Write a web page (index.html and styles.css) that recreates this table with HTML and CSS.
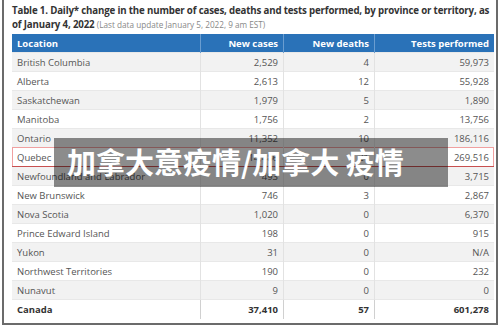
FILE: index.html
```html
<!DOCTYPE html>
<html>
<head>
<meta charset="utf-8">
<link rel="stylesheet" href="styles.css">
</head>
<body>
<div class="frame">
  <div class="content">
    <h1 class="title">Table 1. Daily* change in the number of cases, deaths and tests performed, by province or territory, as of January 4, 2022 <span class="note">(Last data update January 5, 2022, 9 am EST)</span></h1>
    <table class="data">
      <thead>
        <tr><th class="loc">Location</th><th class="c1">New cases</th><th class="c2">New deaths</th><th class="c3">Tests performed</th></tr>
      </thead>
      <tbody>
        <tr><td>British Columbia</td><td>2,529</td><td>4</td><td>59,973</td></tr>
        <tr><td>Alberta</td><td>2,613</td><td>12</td><td>55,928</td></tr>
        <tr><td>Saskatchewan</td><td>1,979</td><td>5</td><td>1,890</td></tr>
        <tr><td>Manitoba</td><td>1,756</td><td>2</td><td>13,756</td></tr>
        <tr><td>Ontario</td><td>11,352</td><td>10</td><td>186,116</td></tr>
        <tr class="hl"><td>Quebec</td><td>14,486</td><td>21</td><td>269,516</td></tr>
        <tr><td>Newfoundland and Labrador</td><td>493</td><td>0</td><td>3,715</td></tr>
        <tr><td>New Brunswick</td><td>746</td><td>3</td><td>2,867</td></tr>
        <tr><td>Nova Scotia</td><td>1,020</td><td>0</td><td>6,370</td></tr>
        <tr><td>Prince Edward Island</td><td>198</td><td>0</td><td>915</td></tr>
        <tr><td>Yukon</td><td>31</td><td>0</td><td>N/A</td></tr>
        <tr><td>Northwest Territories</td><td>190</td><td>0</td><td>232</td></tr>
        <tr><td>Nunavut</td><td>9</td><td>0</td><td>0</td></tr>
        <tr class="total"><td>Canada</td><td>37,410</td><td>57</td><td>601,278</td></tr>
      </tbody>
    </table>
  </div>
  <div class="banner">加拿大意疫情/加拿大 疫情</div>
</div>
</body>
</html>
```
FILE: styles.css
```css
html, body {
  margin: 0;
  padding: 0;
  background: #fff;
}
.frame {
  position: relative;
  margin: 0 2px;
  height: 323px;
  border: 2px solid #6b6b6b;
  border-top: none;
  overflow: hidden;
}
.content {
  padding: 0 2px 0 8px;
}
.title {
  margin: 4px 0 2px;
  font-family: "Open Sans", "Liberation Sans", sans-serif;
  font-weight: 700;
  font-size: 9.7px;
  letter-spacing: -0.16px;
  line-height: 14px;
  color: #333;
}
.note {
  font-weight: 400;
  font-size: 8.2px;
  letter-spacing: 0;
  color: #888;
}
.data {
  width: 482px;
  border-collapse: collapse;
  font-family: "Open Sans", "Liberation Sans", sans-serif;
  font-size: 9.5px;
  color: #555;
}
.data th {
  background: #2a72b8;
  color: #fff;
  font-weight: 700;
  height: 18px;
  padding: 0 5px;
  text-align: right;
  border-left: 1px solid #6a9dd0;
}
.data th.loc {
  text-align: left;
  border-left: none;
  width: 178px;
}
.data th.c1 { width: 72px; }
.data th.c2 { width: 80px; }
.data td {
  height: 19px;
  padding: 0 5px;
  text-align: right;
  border-left: 1px solid #e2e2e2;
  border-top: 1px solid #e8e8e8;
  box-sizing: border-box;
}
.data td:first-child {
  text-align: left;
  border-left: none;
}
.data tbody tr:nth-child(odd) td { background: #f2f2f2; }
.data tbody tr:nth-child(even) td { background: #fff; }
.data tr.hl td {
  border-top: 1px solid #f0a0a0;
  border-bottom: 1px solid #c85050;
}
.data tr.hl td:first-child { box-shadow: inset 1px 0 0 #f0a0a0; }
.data tr.hl td:last-child { box-shadow: inset -1px 0 0 #f0a0a0; }
.data tr.total td {
  background: #bfbfbf;
  color: #333;
  font-weight: 700;
  border-left-color: #d0d0d0;
}
.banner {
  position: absolute;
  left: 50px;
  top: 138px;
  width: 394px;
  height: 49px;
  background: rgba(0, 0, 0, 0.45);
  color: #fff;
  font-family: "Noto Sans CJK SC", sans-serif;
  font-weight: 700;
  font-size: 29px;
  line-height: 46px;
  padding-left: 13px;
  box-sizing: border-box;
  white-space: nowrap;
}
```
